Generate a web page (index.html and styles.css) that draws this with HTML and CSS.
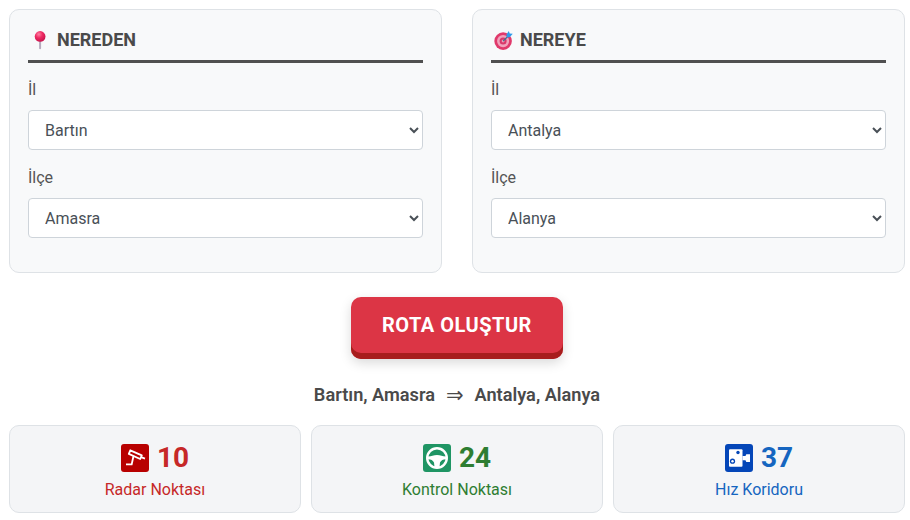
FILE: index.html
```html
<!DOCTYPE html>
<html lang="tr">
<head>
<meta charset="utf-8">
<title>Rota</title>
<link rel="stylesheet" href="styles.css">
</head>
<body>
<main class="page">
  <section class="panels">
    <div class="panel">
      <h2 class="panel-title">
        <svg class="emoji" viewBox="0 0 20 20" aria-hidden="true">
          <defs><radialGradient id="pinhead" cx="0.38" cy="0.3" r="0.75"><stop offset="0" stop-color="#ff7fa3"/><stop offset="0.45" stop-color="#ee2a62"/><stop offset="1" stop-color="#c4124a"/></radialGradient></defs>
          <rect x="10.100" y="9" width="1.800" height="9.500" rx="0.900" fill="#b7a9bd"/>
          <circle cx="11" cy="6.800" r="4.900" fill="url(#pinhead)"/>
        </svg>
        NEREDEN
      </h2>
      <label class="field-label" for="from-il">İl</label>
      <select class="field-select" id="from-il"><option>Bartın</option></select>
      <label class="field-label" for="from-ilce">İlçe</label>
      <select class="field-select" id="from-ilce"><option>Amasra</option></select>
    </div>
    <div class="panel">
      <h2 class="panel-title">
        <svg class="emoji" viewBox="0 0 20 20" aria-hidden="true">
          <circle cx="11" cy="11" r="8" fill="#e0396b"/>
          <circle cx="11" cy="11" r="5.500" fill="#f0a3bc"/>
          <circle cx="11" cy="11" r="3.200" fill="#d9386a"/>
          <circle cx="11" cy="11" r="1.300" fill="#f0a3bc"/>
          <path d="M11 11 17 5" stroke="#3c6f93" stroke-width="1.200"/>
          <path d="M14 5 16.200 1.800 17 4 19.800 4.400 17 7.500 14.400 7.500Z" fill="#2f9bea"/>
        </svg>
        NEREYE
      </h2>
      <label class="field-label" for="to-il">İl</label>
      <select class="field-select" id="to-il"><option>Antalya</option></select>
      <label class="field-label" for="to-ilce">İlçe</label>
      <select class="field-select" id="to-ilce"><option>Alanya</option></select>
    </div>
  </section>
  <div class="action"><button class="route-btn" type="button">ROTA OLUŞTUR</button></div>
  <p class="summary"><span>Bartın, Amasra</span><span class="arrow">⇒</span><span>Antalya, Alanya</span></p>
  <section class="stats">
    <div class="stat stat-red">
      <div class="stat-top">
        <svg class="stat-icon" viewBox="0 0 28 28" aria-hidden="true">
          <rect width="28" height="28" rx="3" fill="#b80000"/>
          <path d="M9.300 6.300 20.800 11.300 19.200 15 7.800 9.900Z" fill="#b80000" stroke="#fff" stroke-width="1.800" stroke-linejoin="round"/>
          <path d="M20 13.200 24 14.600" stroke="#fff" stroke-width="1.800"/>
          <path d="M12.500 12 10.700 20.300H5" fill="none" stroke="#fff" stroke-width="1.800"/>
        </svg>
        <span class="stat-num">10</span>
      </div>
      <div class="stat-label">Radar Noktası</div>
    </div>
    <div class="stat stat-green">
      <div class="stat-top">
        <svg class="stat-icon" viewBox="0 0 28 28" aria-hidden="true">
          <rect width="28" height="28" rx="3" fill="#1f9564"/>
          <circle cx="14" cy="14" r="9.800" fill="none" stroke="#fff" stroke-width="2.400"/>
          <path d="M5 12.400C8.500 12.400 10.500 11 14 11s5.500 1.400 9 1.400V15.200C20 15.200 18 16.400 17 18.500L16.500 23h-5L11 18.500C10 16.400 8 15.200 5 15.200Z" fill="#fff"/>
        </svg>
        <span class="stat-num">24</span>
      </div>
      <div class="stat-label">Kontrol Noktası</div>
    </div>
    <div class="stat stat-blue">
      <div class="stat-top">
        <svg class="stat-icon" viewBox="0 0 28 28" aria-hidden="true">
          <rect width="28" height="28" rx="3" fill="#0446b8"/>
          <rect x="4" y="5.200" width="13.500" height="17.600" rx="1" fill="#fff"/>
          <circle cx="7.500" cy="17.200" r="2.600" fill="#0446b8"/>
          <circle cx="7.500" cy="17.200" r="1.200" fill="#fff"/>
          <circle cx="13" cy="8.500" r="1.700" fill="#0446b8"/>
          <path d="M17.500 12h3l.8-1.700H25V18h-3.700l-.8-1.800h-3Z" fill="#fff"/>
        </svg>
        <span class="stat-num">37</span>
      </div>
      <div class="stat-label">Hız Koridoru</div>
    </div>
  </section>
</main>
</body>
</html>
```
FILE: styles.css
```css
* { box-sizing: border-box; }
html, body { margin: 0; background: #fff; }
body { font-family: Roboto, "Liberation Sans", sans-serif; color: #4a4a4a; }
.page { width: 910px; height: 520px; padding: 9px 5px 0 9px; overflow: hidden; }
.panels { display: grid; grid-template-columns: 433px 433px; gap: 30px; }
.panel { height: 264px; padding: 15px 18px 0; background: #f8f9fa; border: 1px solid #dee2e6; border-radius: 10px; }
.panel-title { display: flex; align-items: center; gap: 7px; margin: 0 0 15px; height: 38px; padding-bottom: 6px; border-bottom: 3px solid #505050; font-size: 18px; font-weight: 700; color: #4a4a4a; line-height: 24px; }
.emoji { width: 22px; height: 22px; flex: none; }
.field-label { display: block; height: 24px; margin-bottom: 8px; font-size: 16px; line-height: 24px; color: #555; }
.field-select { display: block; width: 100%; height: 40px; margin-bottom: 16px; padding: 0 12px; background: #fff; border: 1px solid #ced4da; border-radius: 4px; font: 400 16px Roboto, sans-serif; color: #495057; }
.action { display: flex; justify-content: center; margin-top: 24px; }
.route-btn { width: 212px; height: 62px; padding: 0 0 6px; background: #dc3545; border: 0; border-radius: 10px; box-shadow: inset 0 -6px 0 #a71d1d, 0 4px 12px rgba(0,0,0,.15); font: 700 20px Roboto, sans-serif; letter-spacing: .5px; color: #fff; }
.summary { display: flex; justify-content: center; gap: 11px; margin: 24px 0 0; height: 24px; font-size: 18.2px; font-weight: 600; line-height: 24px; color: #4a4a4a; }
.arrow { font-family: "DejaVu Sans", sans-serif; font-weight: 400; font-size: 21px; }
.stats { display: grid; grid-template-columns: repeat(3, 292px); gap: 10px; margin-top: 18px; }
.stat { height: 88px; padding-top: 17px; background: #f4f5f7; border: 1px solid #dee2e6; border-radius: 10px; text-align: center; }
.stat-top { display: flex; justify-content: center; align-items: center; gap: 8px; height: 30px; }
.stat-icon { width: 28px; height: 28px; }
.stat-num { font-size: 28px; font-weight: 700; line-height: 30px; }
.stat-label { margin-top: 7px; font-size: 16px; line-height: 20px; }
.stat-red .stat-num, .stat-red .stat-label { color: #c62828; }
.stat-green .stat-num, .stat-green .stat-label { color: #2e7d32; }
.stat-blue .stat-num, .stat-blue .stat-label { color: #1565c0; }
```
